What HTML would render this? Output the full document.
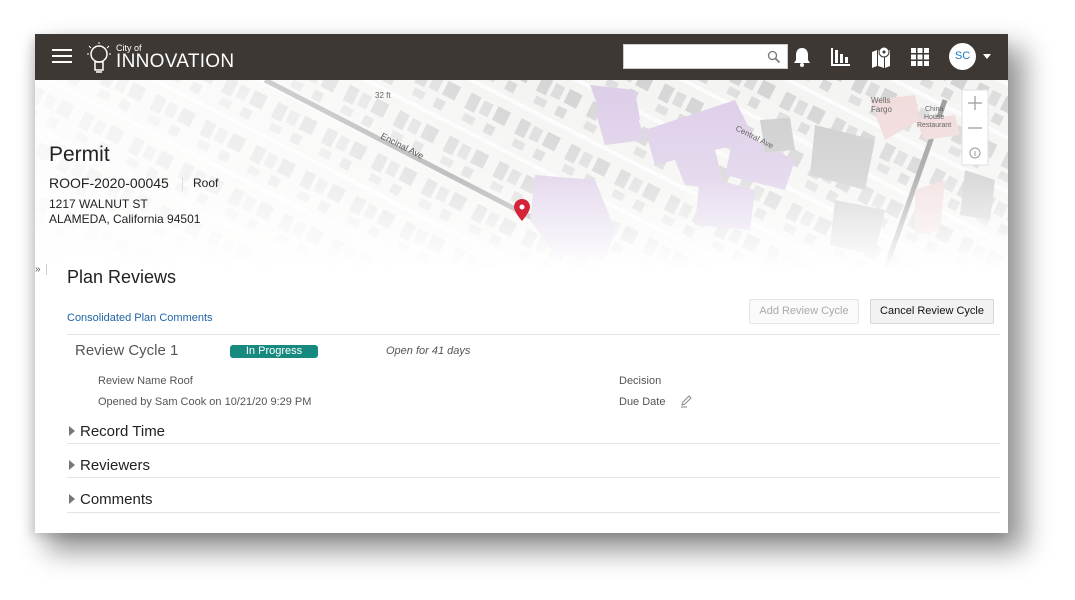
<!DOCTYPE html>
<html><head><meta charset="utf-8"><style>
*{margin:0;padding:0;box-sizing:border-box}
body{width:1075px;height:600px;background:#fff;font-family:"Liberation Sans",sans-serif;position:relative;overflow:hidden}
.win{position:absolute;left:35px;top:34px;width:973px;height:499px;background:#fff;box-shadow:14px 16px 26px 2px rgba(0,0,0,.42),-4px 4px 10px rgba(0,0,0,.15);overflow:hidden}
.hdr{position:absolute;left:0;top:0;width:973px;height:46px;background:#3d3834}
.map{position:absolute;left:0;top:46px;width:973px;height:190px}
.t{position:absolute;white-space:nowrap}
.line{position:absolute;left:32px;width:933px;height:1px;background:#e4e4e4}
.btn{position:absolute;height:25px;border:1px solid #d6d6d6;border-radius:2px;font-size:11px;text-align:center;line-height:23px}
.tri{position:absolute;width:0;height:0;border-left:6px solid #777;border-top:5px solid transparent;border-bottom:5px solid transparent}
</style></head><body>
<div class="win">
<div class="map">
<svg width="973" height="190" viewBox="0 0 973 190">
<defs>
<pattern id="b" width="56" height="48" patternUnits="userSpaceOnUse" patternTransform="rotate(27)">
<rect width="56" height="48" fill="#f4f4f2"/>
<rect x="3" y="5" width="11" height="17" fill="#d6d6d6"/><rect x="18" y="6" width="10" height="14" fill="#dcdcdc"/><rect x="33" y="5" width="14" height="15" fill="#d3d3d3"/>
<rect x="6" y="26" width="12" height="8" fill="#dedede"/><rect x="30" y="25" width="10" height="10" fill="#d9d9d9"/>
<rect x="0" y="40" width="56" height="4" fill="#fcfcfc"/>
</pattern>
<linearGradient id="f" x1="0" y1="0" x2="0" y2="1"><stop offset="0" stop-color="#fff" stop-opacity="0"/><stop offset=".5" stop-color="#fff" stop-opacity=".25"/><stop offset=".8" stop-color="#fff" stop-opacity=".7"/><stop offset="1" stop-color="#fff" stop-opacity="1"/></linearGradient>
<linearGradient id="g" x1="0" y1="0" x2="1" y2="0"><stop offset="0" stop-color="#fff" stop-opacity=".8"/><stop offset=".3" stop-color="#fff" stop-opacity=".45"/><stop offset=".5" stop-color="#fff" stop-opacity="0"/></linearGradient>
</defs>
<rect width="973" height="190" fill="url(#b)"/>
<line x1="230" y1="0" x2="540" y2="160" stroke="#9a9a9a" stroke-width="5"/>
<line x1="910" y1="20" x2="850" y2="190" stroke="#9a9a9a" stroke-width="5"/>
<g fill="#dccde8">
<polygon points="555,5 600,10 605,40 570,45"/><polygon points="560,30 600,28 610,60 570,65"/>
<polygon points="610,50 700,20 720,60 680,70 690,110 650,105 640,80 620,85"/>
<polygon points="700,50 760,80 750,110 690,95"/><polygon points="665,95 720,110 715,150 660,145"/>
<polygon points="500,95 560,100 580,150 570,180 520,175 495,140"/>
</g>
<g fill="#f0dada"><polygon points="835,20 880,15 885,40 850,60"/><polygon points="880,40 920,35 925,55 890,60"/><polygon points="880,110 910,100 905,150 880,155"/></g>
<g fill="#cccccc"><polygon points="780,45 840,60 830,110 775,95"/><polygon points="725,40 755,38 760,70 730,72"/><polygon points="930,90 960,100 955,140 925,135"/><polygon points="800,120 850,130 840,175 795,165"/></g>
<rect width="973" height="190" fill="url(#g)"/>
<rect width="973" height="190" fill="url(#f)"/>
<path d="M487 119c-5 0-8 4-8 8 0 5 8 14 8 14s8-9 8-14c0-4-3-8-8-8z" fill="#d3243a"/><circle cx="487" cy="127" r="2.5" fill="#fff"/>
<text x="340" y="18" font-size="8" fill="#666" font-family="Liberation Sans">32 ft</text>
<text x="345" y="58" font-size="9" fill="#555" font-family="Liberation Sans" transform="rotate(27 345 58)">Encinal Ave</text>
<text x="700" y="50" font-size="8" fill="#666" font-family="Liberation Sans" transform="rotate(27 700 50)">Central Ave</text>
<text x="836" y="23" font-size="8" fill="#666" font-family="Liberation Sans">Wells</text><text x="836" y="32" font-size="8" fill="#666" font-family="Liberation Sans">Fargo</text>
<text x="890" y="31" font-size="7" fill="#666" font-family="Liberation Sans">China</text><text x="889" y="39" font-size="7" fill="#666" font-family="Liberation Sans">House</text><text x="882" y="47" font-size="7" fill="#666" font-family="Liberation Sans">Restaurant</text>
<rect x="927" y="10" width="26" height="75" fill="#fff" stroke="#e0e0e0"/>
<path d="M933 23h14M940 16v14M933 48h14" stroke="#999" stroke-width="1.2"/>
<circle cx="940" cy="73" r="5" fill="none" stroke="#999"/><path d="M940 71v5" stroke="#999"/>
</svg>
</div>
<div class="hdr">
<div style="position:absolute;left:17px;top:15px;width:20px;height:2px;background:#fff;box-shadow:0 6px 0 #fff,0 12px 0 #fff"></div>
<svg style="position:absolute;left:50px;top:6px" width="28" height="36" viewBox="0 0 28 36"><circle cx="14" cy="14" r="8" fill="none" stroke="#fff" stroke-width="1.5"/><path d="M10 22h8v8h-8zM11 32h6" stroke="#fff" stroke-width="1.5" fill="none"/><path d="M14 2v2M4 6l2 2M24 6l-2 2M2 14h2M24 14h2" stroke="#fff"/></svg>
<div class="t" style="left:81px;top:9px;font-size:9px;color:#fff">City of</div>
<div class="t" style="left:81px;top:17px;font-size:19px;color:#fff;letter-spacing:.3px">INNOVATION</div>
<div style="position:absolute;left:588px;top:10px;width:165px;height:25px;background:#fff;border:1px solid #ccc"></div>
<svg style="position:absolute;left:732px;top:16px" width="14" height="14"><circle cx="5.5" cy="5.5" r="4" fill="none" stroke="#777" stroke-width="1.3"/><path d="M8.5 8.5l4 4" stroke="#777" stroke-width="1.6"/></svg>
<svg style="position:absolute;left:757px;top:12px" width="20" height="22"><path d="M10 2c-4 0-6 3-6 7v5l-2 3h16l-2-3V9c0-4-2-7-6-7z" fill="#fff"/><circle cx="10" cy="19" r="2" fill="#fff"/></svg>
<svg style="position:absolute;left:796px;top:13px" width="20" height="20"><path d="M1 1v17h18" stroke="#fff" stroke-width="2" fill="none"/><rect x="4" y="3" width="3" height="13" fill="#fff"/><rect x="9" y="7" width="3" height="9" fill="#fff"/><rect x="14" y="10" width="3" height="6" fill="#fff"/></svg>
<svg style="position:absolute;left:836px;top:12px" width="20" height="22"><path d="M1 6l5-2v16l-5 2zM7 4l6 2v16l-6-2zM14 6l5-2v16l-5 2z" fill="#fff"/><circle cx="13" cy="6" r="5" fill="#fff" stroke="#3d3834"/><circle cx="13" cy="6" r="1.5" fill="#3d3834"/></svg>
<svg style="position:absolute;left:876px;top:14px" width="18" height="18" fill="#fff"><rect x="0" y="0" width="5" height="5"/><rect x="6.5" y="0" width="5" height="5"/><rect x="13" y="0" width="5" height="5"/><rect x="0" y="6.5" width="5" height="5"/><rect x="6.5" y="6.5" width="5" height="5"/><rect x="13" y="6.5" width="5" height="5"/><rect x="0" y="13" width="5" height="5"/><rect x="6.5" y="13" width="5" height="5"/><rect x="13" y="13" width="5" height="5"/></svg>
<div style="position:absolute;left:914px;top:9px;width:27px;height:27px;border-radius:50%;background:#fff;color:#1f7ac0;font-size:11px;text-align:center;line-height:27px">SC</div>
<div style="position:absolute;left:948px;top:20px;border-top:5px solid #fff;border-left:4px solid transparent;border-right:4px solid transparent"></div>
</div>
<div class="t" style="left:14px;top:109px;font-size:21px;color:#222">Permit</div>
<div class="t" style="left:14px;top:141px;font-size:14px;color:#222">ROOF-2020-00045</div>
<div style="position:absolute;left:147px;top:143px;width:1px;height:14px;background:#ddd"></div>
<div class="t" style="left:158px;top:142px;font-size:12px;color:#222">Roof</div>
<div class="t" style="left:14px;top:163px;font-size:12px;color:#222">1217 WALNUT ST</div>
<div class="t" style="left:14px;top:178px;font-size:12px;color:#222">ALAMEDA, California 94501</div>
<div class="t" style="left:0;top:230px;font-size:10px;color:#555">»</div>
<div style="position:absolute;left:11px;top:230px;width:1px;height:11px;background:#ccc"></div>
<div class="t" style="left:32px;top:233px;font-size:18px;color:#222">Plan Reviews</div>
<div class="t" style="left:32px;top:278px;font-size:11px;color:#1f64a8">Consolidated Plan Comments</div>
<div class="btn" style="left:714px;top:265px;width:110px;color:#aaa;background:#fafafa;border-color:#e6e6e6">Add Review Cycle</div>
<div class="btn" style="left:835px;top:265px;width:124px;color:#111;background:#f2f2f2">Cancel Review Cycle</div>
<div class="line" style="top:300px"></div>
<div class="t" style="left:40px;top:308px;font-size:15px;color:#555">Review Cycle 1</div>
<div style="position:absolute;left:195px;top:311px;width:88px;height:13px;background:#178a7f;border-radius:3px;color:#fff;font-size:11px;text-align:center;line-height:13px">In Progress</div>
<div class="t" style="left:351px;top:311px;font-size:11px;color:#555;font-style:italic">Open for 41 days</div>
<div class="t" style="left:63px;top:341px;font-size:11px;color:#555">Review Name Roof</div>
<div class="t" style="left:63px;top:362px;font-size:11px;color:#555">Opened by Sam Cook on 10/21/20 9:29 PM</div>
<div class="t" style="left:584px;top:341px;font-size:11px;color:#555">Decision</div>
<div class="t" style="left:584px;top:362px;font-size:11px;color:#555">Due Date</div>
<svg style="position:absolute;left:645px;top:361px" width="12" height="13"><path d="M2 10l1-3 6-6 2 2-6 6zM1 12h6" stroke="#888" fill="none"/></svg>
<div class="tri" style="left:34px;top:392px"></div><div class="t" style="left:45px;top:389px;font-size:15px;color:#222">Record Time</div>
<div class="line" style="top:409px"></div>
<div class="tri" style="left:34px;top:426px"></div><div class="t" style="left:45px;top:423px;font-size:15px;color:#222">Reviewers</div>
<div class="line" style="top:443px"></div>
<div class="tri" style="left:34px;top:460px"></div><div class="t" style="left:45px;top:457px;font-size:15px;color:#222">Comments</div>
<div class="line" style="top:478px"></div>
</div>
</body></html>
